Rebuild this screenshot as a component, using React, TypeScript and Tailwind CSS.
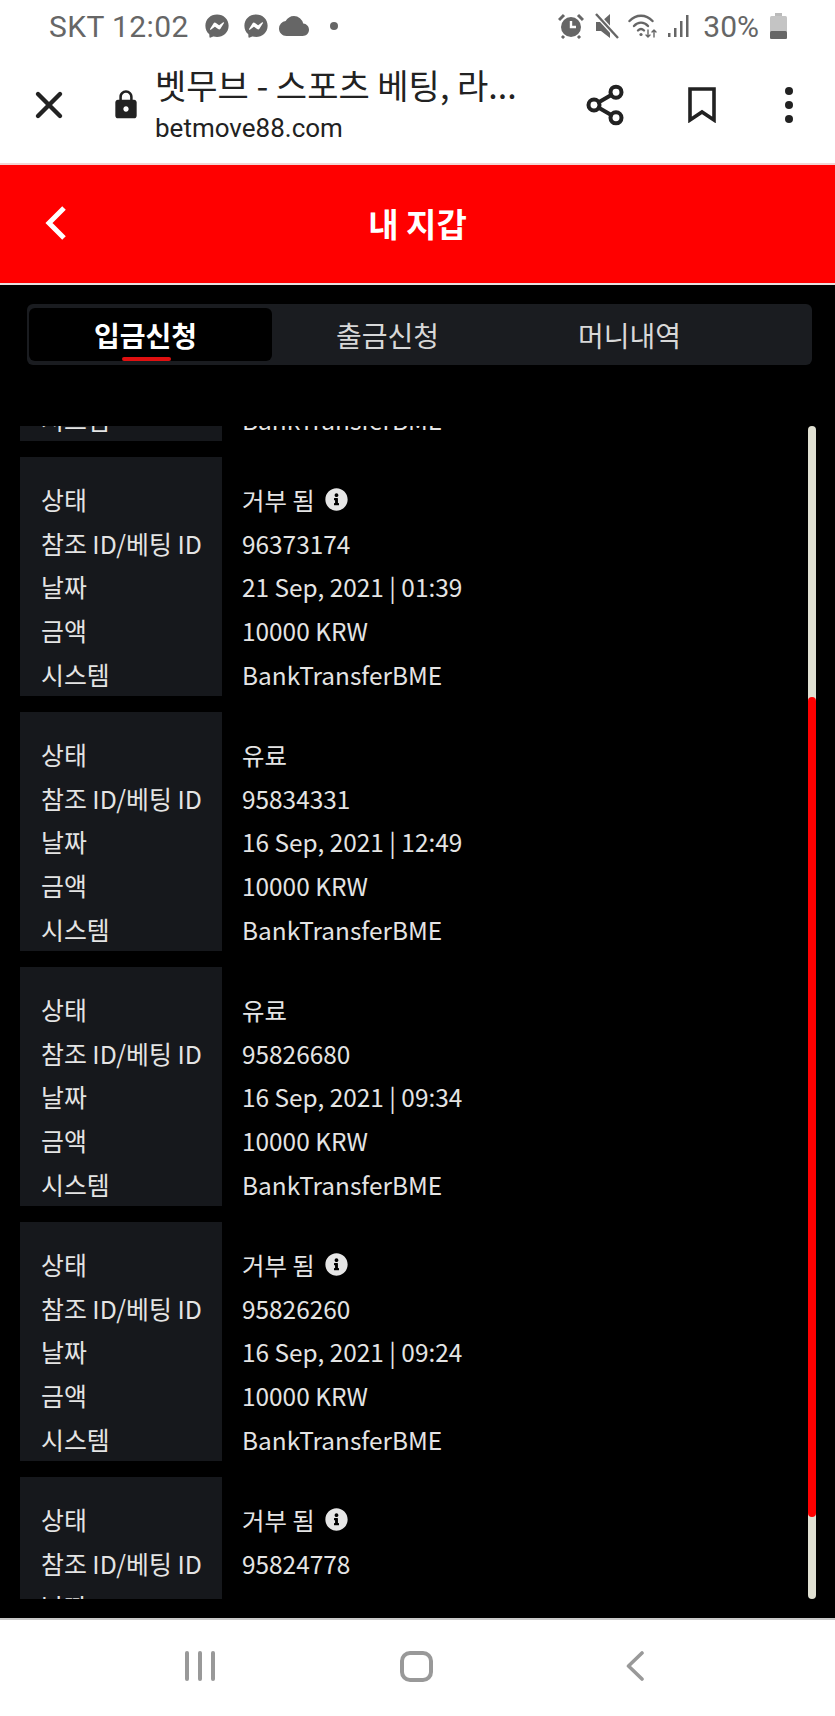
import { Share2, X } from 'lucide-react'
import { FaFacebookMessenger, FaInfoCircle } from 'react-icons/fa'
import { MdCloud, MdLock } from 'react-icons/md'

type Tx = { status: string; rejected?: boolean; id: string; date: string; amount: string; system: string }

const txs: Tx[] = [
  { status: '거부 됨', rejected: true, id: '96373174', date: '21 Sep, 2021 | 01:39', amount: '10000 KRW', system: 'BankTransferBME' },
  { status: '유료', id: '95834331', date: '16 Sep, 2021 | 12:49', amount: '10000 KRW', system: 'BankTransferBME' },
  { status: '유료', id: '95826680', date: '16 Sep, 2021 | 09:34', amount: '10000 KRW', system: 'BankTransferBME' },
  { status: '거부 됨', rejected: true, id: '95826260', date: '16 Sep, 2021 | 09:24', amount: '10000 KRW', system: 'BankTransferBME' },
  { status: '거부 됨', rejected: true, id: '95824778', date: '', amount: '', system: '' },
]

const labels = ['상태', '참조 ID/베팅 ID', '날짜', '금액', '시스템']

function TxCard({ tx }: { tx: Tx }) {
  return (
    <div className="flex h-[239px] shrink-0">
      <div className="w-[202px] shrink-0 bg-[#16181c] pl-[21px] pt-[21px] text-[24.9px]">
        {labels.map((l) => (
          <div key={l} className="h-[43.7px] leading-[43.7px] whitespace-nowrap">{l}</div>
        ))}
      </div>
      <div className="pl-[20px] pt-[21px]">
        <div className="flex h-[43.7px] items-center gap-[10px] whitespace-nowrap">
          {tx.status}
          {tx.rejected && <FaInfoCircle className="size-[23px] text-[#e6e6e6]" />}
        </div>
        <div className="h-[43.7px] leading-[43.7px]">{tx.id}</div>
        <div className="h-[43.7px] leading-[43.7px] whitespace-nowrap">{tx.date}</div>
        <div className="h-[43.7px] leading-[43.7px]">{tx.amount}</div>
        <div className="h-[43.7px] leading-[43.7px]">{tx.system}</div>
      </div>
    </div>
  )
}

export default function App() {
  return (
    <div className="flex h-[1716px] w-[835px] flex-col overflow-hidden bg-black font-['Noto_Sans_CJK_KR','Noto_Sans',sans-serif]">
      {/* Status bar */}
      <div className="flex h-[52px] shrink-0 items-center bg-white pl-[49px] pr-[48px] font-['Roboto',sans-serif] text-[30px] text-[#666]">
        <span className="whitespace-nowrap tracking-[0.4px]">SKT 12:02</span>
        <FaFacebookMessenger className="ml-[16px] size-[24px]" />
        <FaFacebookMessenger className="ml-[15px] size-[24px]" />
        <MdCloud className="ml-[11px] size-[30px]" />
        <span className="ml-[21px] size-[8px] rounded-full bg-[#666]" />
        <svg className="ml-auto" width="26" height="26" viewBox="0 0 26 26" fill="#666">
          <circle cx="13" cy="14" r="10" />
          <path d="M1 7 L6 2 M20 2 L25 7 M6 23 L4 25 M20 23 L22 25" stroke="#666" strokeWidth="3" />
          <path d="M13 8 V14 H18" stroke="#fff" strokeWidth="2.4" fill="none" />
        </svg>
        <svg className="ml-[11px]" width="24" height="26" viewBox="0 0 24 26" fill="#666">
          <path d="M1 9 H6 L15 1 V25 L6 18 H1 Z" />
          <path d="M1 1 L23 25" stroke="#fff" strokeWidth="5" />
          <path d="M1 1 L23 25" stroke="#666" strokeWidth="2.4" />
        </svg>
        <svg className="ml-[9px]" width="30" height="28" viewBox="0 0 30 28" fill="none" stroke="#666" strokeWidth="2.4" strokeLinecap="round">
          <path d="M1.5 9 C8 2 18 2 24.5 9" />
          <path d="M6 14 C10 9.5 16 9.5 20 14" />
          <path d="M10 18.5 C12 16.5 14 16.5 16 18.5" />
          <circle cx="13" cy="22.5" r="1.6" fill="#666" stroke="none" />
          <path d="M20 18 V25 M18 23 L20 25 L22 23 M26 25 V18 M24 20 L26 18 L28 20" strokeWidth="1.4" />
        </svg>
        <svg className="ml-[10px]" width="22" height="24" viewBox="0 0 22 24" fill="#666">
          <rect x="0" y="19" width="2.5" height="4" />
          <rect x="6" y="14" width="2.5" height="9" />
          <rect x="12" y="7" width="2.5" height="16" />
          <rect x="18" y="1" width="2.5" height="22" />
        </svg>
        <span className="ml-[13px]">30%</span>
        <svg className="ml-[11px]" width="17" height="26" viewBox="0 0 17 26">
          <rect x="5" y="0" width="7" height="3" fill="#bbb" />
          <rect x="0" y="3" width="17" height="23" rx="1.5" fill="#c4c4c4" />
          <rect x="0" y="18" width="17" height="8" rx="1.5" fill="#666" />
        </svg>
      </div>

      {/* Browser bar */}
      <div className="flex h-[111px] shrink-0 items-center bg-white pb-[6px] text-[#222]">
        <X className="ml-[27px] size-[44px] shrink-0" strokeWidth={2.4} />
        <MdLock className="ml-[39px] size-[32px] shrink-0" />
        <div className="ml-[13px] w-[370px]">
          <div className="whitespace-nowrap text-[34px] leading-[40px]">벳무브 - 스포츠 베팅, 라...</div>
          <div className="mt-[6px] font-['Roboto',sans-serif] text-[26px] leading-[34px]">betmove88.com</div>
        </div>
        <Share2 className="ml-[58px] size-[44px] shrink-0" strokeWidth={2.2} />
        <svg className="ml-[61px] shrink-0" width="28" height="36" viewBox="0 0 28 36" fill="none" stroke="#222" strokeWidth="3.6">
          <path d="M2 2 H26 V33 L14 25 L2 33 Z" />
        </svg>
        <div className="ml-[69px] flex flex-col gap-[6px]">
          <span className="size-[8px] rounded-full bg-[#222]" />
          <span className="size-[8px] rounded-full bg-[#222]" />
          <span className="size-[8px] rounded-full bg-[#222]" />
        </div>
      </div>

      {/* Header */}
      <div className="flex h-[122px] shrink-0 items-center border-y-2 border-t-[#f3d4d4] border-b-[#e8e0e0] bg-[#ff0000]">
        <svg className="mb-[3px] ml-[45px] shrink-0" width="21" height="34" viewBox="0 0 21 34" fill="none" stroke="#fff" strokeWidth="5" strokeLinejoin="miter">
          <path d="M19 2 L4 17 L19 32" />
        </svg>
        <div className="ml-[-66px] w-full text-center text-[33px] font-bold text-white">내 지갑</div>
      </div>

      {/* Tabs */}
      <div className="ml-[27px] mr-[23px] mt-[19px] flex h-[61px] shrink-0 rounded-[6px] bg-[#1a1c20] p-[4px_2px] text-[28px] text-[#d8d8d8]">
        <div className="relative flex w-[243px] items-center justify-center rounded-[6px] bg-black pr-[10px] font-bold text-white">
          입금신청
          <span className="absolute bottom-0 left-[93px] h-[4px] w-[49px] rounded-[2px] bg-[#e01010]" />
        </div>
        <div className="flex w-[241px] items-center justify-center pr-[10px]">출금신청</div>
        <div className="flex w-[241px] items-center justify-center pr-[8px]">머니내역</div>
      </div>

      {/* Transactions */}
      <div className="mt-[61px] flex h-[1173px] shrink-0">
        <div className="w-[808px] overflow-hidden text-[24.4px] text-[#e4e4e4]">
          <div className="mt-[-224px] ml-[20px] flex flex-col gap-[16px]">
            <TxCard tx={txs[0]} />
            {txs.map((tx) => (
              <TxCard key={tx.id} tx={tx} />
            ))}
          </div>
        </div>
        <div className="h-full w-[8px] overflow-hidden rounded-full bg-[#e0e0d2]">
          <div className="mt-[271px] h-[820px] rounded-full bg-[#ff0000]" />
        </div>
      </div>

      {/* Android nav */}
      <div className="mt-[19px] flex h-[98px] shrink-0 items-start border-t-2 border-t-[#c8c8c8] bg-white pt-[31px]">
        <div className="ml-[185px] flex h-[30px] gap-[9px]">
          <span className="w-[4px] rounded-sm bg-[#999]" />
          <span className="w-[4px] rounded-sm bg-[#999]" />
          <span className="w-[4px] rounded-sm bg-[#999]" />
        </div>
        <div className="ml-[185px] h-[31px] w-[33px] rounded-[10px] border-[4px] border-[#999]" />
        <svg className="ml-[193px]" width="18" height="30" viewBox="0 0 18 30" fill="none" stroke="#999" strokeWidth="3.6" strokeLinecap="round" strokeLinejoin="round">
          <path d="M16 2 L2.5 15 L16 28" />
        </svg>
      </div>
    </div>
  )
}
